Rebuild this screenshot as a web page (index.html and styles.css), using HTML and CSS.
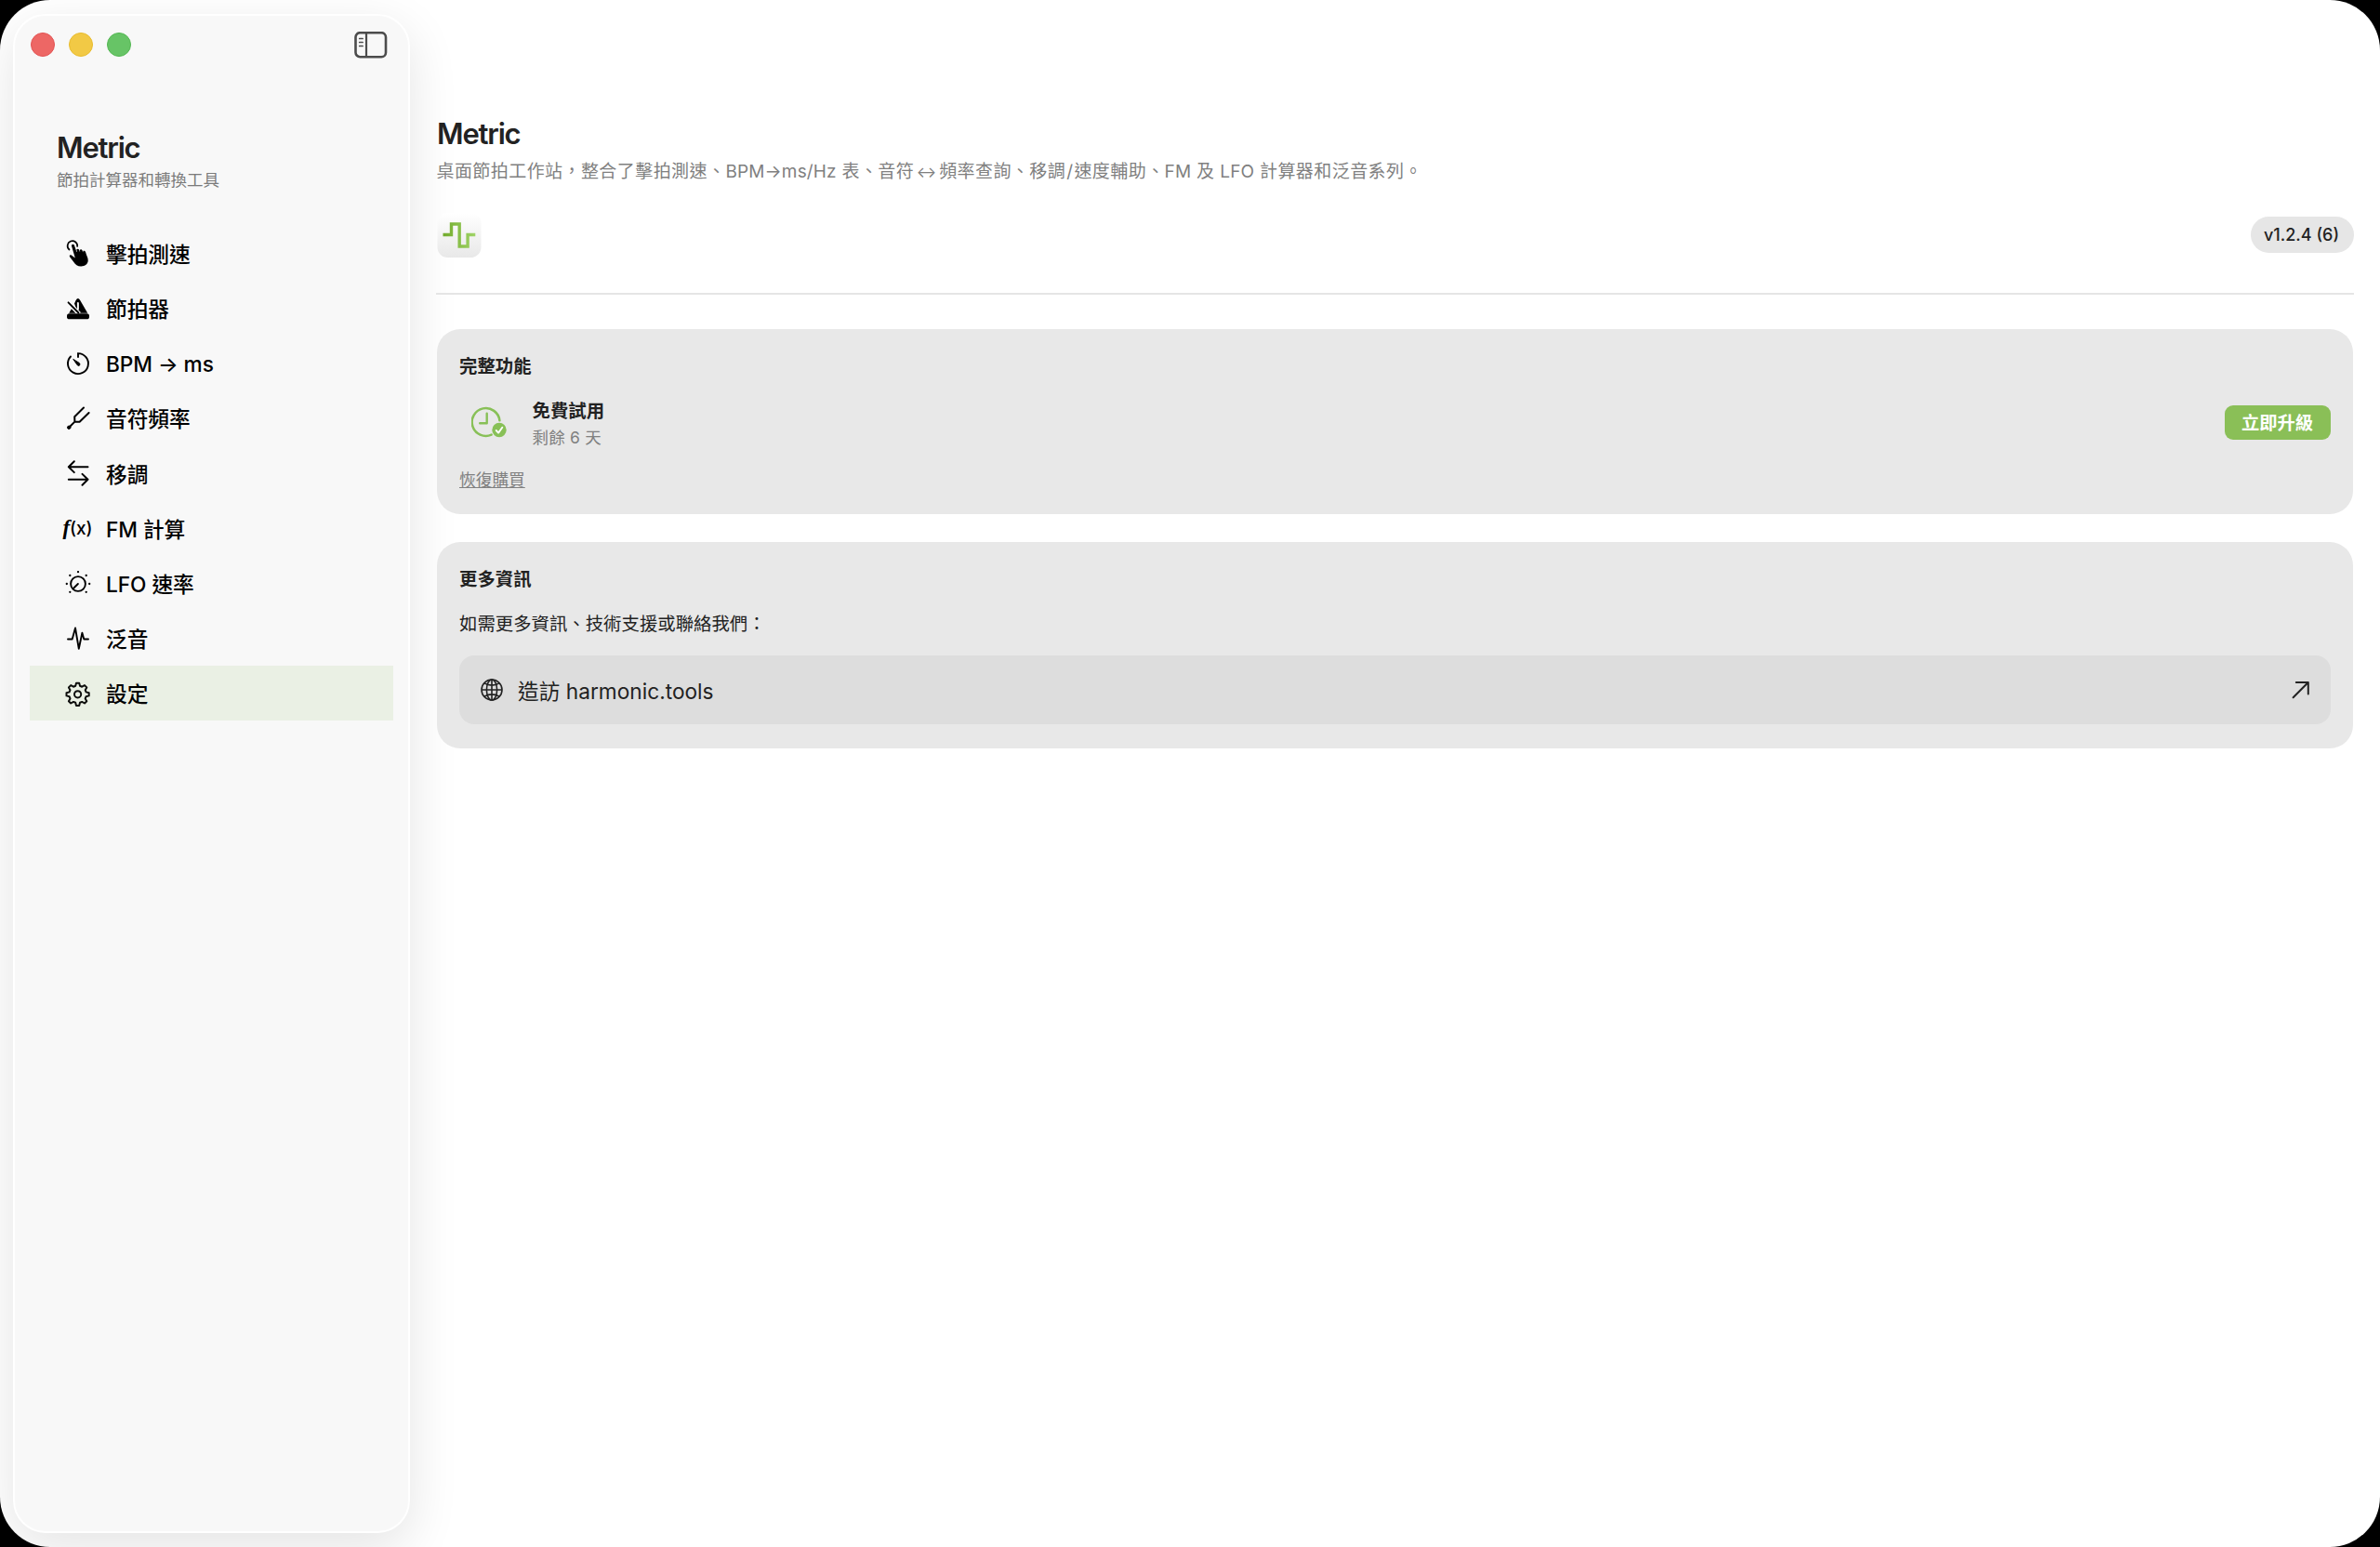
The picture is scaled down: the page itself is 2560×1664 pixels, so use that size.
FILE: index.html
```
<!DOCTYPE html>
<html lang="zh-Hant">
<head>
  <meta charset="UTF-8">
  <meta name="viewport" content="width=device-width, initial-scale=1.0">
  <title>Metric</title>
  <link rel="stylesheet" href="styles.css">
</head>
<body>

  <div class="window">
    <aside class="sidebar">
      <div class="titlebar">
        <div class="lights">
          <span class="light red"></span>
          <span class="light yellow"></span>
          <span class="light green"></span>
        </div>
        <svg class="toggle" viewBox="0 0 36 30" fill="none" stroke="#4c4c4c" stroke-linecap="round">
          <rect x="1.5" y="1.2" width="32.5" height="26" rx="4.8" stroke-width="2.6"/>
          <path d="M13 2v25" stroke-width="2.2"/>
          <path d="M5.7 7.500h3.4M5.7 11.500h3.4M5.7 15.500h3.4" stroke-width="1.7"/>
        </svg>
      </div>

      <div class="brand">
        <h2>Metric</h2>
        <p>節拍計算器和轉換工具</p>
      </div>

      <nav class="menu">
        <a class="item">
          <svg class="icon" viewBox="0 0 32 32">
            <path d="M6.500 11.500A5.300 5.300 0 1 1 15.200 8" fill="none" stroke="#000" stroke-width="1.700" stroke-linecap="round"/>
            <path d="M9 7.500c-.4-1.800 2.300-2.600 2.900-.8l2.500 7.200.5-.1-.6-2.200c.5-1.300 2.300-1.200 2.800.1l.7 2 .4-.1-.4-1.500c.6-1.200 2.200-1 2.700.2l.6 1.900.4-.1-.2-1c1.200-.9 2.500-.1 2.800 1.100.8 3.300 2.800 6.100 2.600 9.100-.2 3.900-3.400 6.200-7.500 6.200-4 0-6-2-8-4.800l-4-5.300c-1.200-1.700.3-2.800 1.900-1.700l3.700 2.900z" fill="#000"/>
          </svg>
          <span>擊拍測速</span>
        </a>
        <a class="item">
          <svg class="icon" viewBox="0 0 32 32">
            <path d="M12 10.500L13.600 7q2.200-4 4.600 0l8 13.700H6.200l2.700-4.500 4.500 4.500h2.500z" fill="#000"/>
            <path d="M15.900 16.500V10" stroke="#f8f8f8" stroke-width="2" stroke-linecap="round"/>
            <path d="M5.500 9.300l12 12" stroke="#f8f8f8" stroke-width="4"/>
            <path d="M5.500 9.300l11 11.200" stroke="#000" stroke-width="1.800" stroke-linecap="round"/>
            <rect x="4" y="21.300" width="24" height="6" rx="2.600" fill="#000"/>
          </svg>
          <span>節拍器</span>
        </a>
        <a class="item">
          <svg class="icon" viewBox="0 0 32 32" fill="none" stroke="#000" stroke-width="1.900" stroke-linecap="round">
            <path d="M16 9V5.100A11 11 0 1 1 8 8.500"/>
            <path d="M11 11.700l4.300 6.100q1.500 1.200 2.300.1t-.1-2.200z" fill="#000" stroke-width="1"/>
          </svg>
          <span>BPM → ms</span>
        </a>
        <a class="item">
          <svg class="icon" viewBox="0 0 32 32" fill="none" stroke="#000" stroke-width="2" stroke-linecap="round" stroke-linejoin="round">
            <path d="M22 4.500l-9.800 9.800.2 5.300 5.200.2L27.600 10M12.400 19.600L6.500 25.500"/>
            <circle cx="6.200" cy="25.800" r="1.700" fill="#000" stroke-width="1"/>
          </svg>
          <span>音符頻率</span>
        </a>
        <a class="item">
          <svg class="icon" viewBox="0 0 32 32" fill="none" stroke="#000" stroke-width="2" stroke-linecap="round" stroke-linejoin="round">
            <path d="M26.500 9.200H5.800M11.800 3.300L5.800 9.200l6 5.900M5.800 22.800h20.700M20.500 16.900l6 5.900-6 5.900"/>
          </svg>
          <span>移調</span>
        </a>
        <a class="item">
          <span class="icon fx"><i>f</i>(x)</span>
          <span>FM 計算</span>
        </a>
        <a class="item">
          <svg class="icon" viewBox="0 0 32 32">
            <circle cx="16" cy="17" r="7.900" fill="none" stroke="#000" stroke-width="1.900"/>
            <path d="M11.300 21.500l4.600-4.500" stroke="#000" stroke-width="1.900" stroke-linecap="round"/>
            <path d="M16 4.200h.01M7.300 8h.01M24.700 8h.01M3.800 17h.01M28.200 17h.01M7.300 25.800h.01M24.700 25.800h.01" stroke="#000" stroke-width="2.300" stroke-linecap="round"/>
          </svg>
          <span>LFO 速率</span>
        </a>
        <a class="item">
          <svg class="icon" viewBox="0 0 32 32" fill="none" stroke="#000" stroke-width="1.900" stroke-linecap="round" stroke-linejoin="round">
            <path d="M5 16.500h4.700L13 4.500l3.800 22.300 3.600-17 1.900 6.700h4.700"/>
          </svg>
          <span>泛音</span>
        </a>
        <a class="item active">
          <svg class="icon" viewBox="0 0 32 32" fill="none" stroke="#0d0e0c" stroke-width="2" stroke-linejoin="round">
            <path d="M14 4.700h3.200l.8 3.100 2.200.9 2.800-1.600 2.300 2.300-1.600 2.800.9 2.200 3.100.8v3.200l-3.100.8-.9 2.200 1.600 2.800-2.300 2.300-2.800-1.600-2.200.9-.8 3.100H14l-.8-3.100-2.200-.9-2.800 1.600-2.300-2.300 1.600-2.800-.9-2.200-3.100-.8v-3.200l3.100-.8.9-2.200-1.600-2.800 2.300-2.300 2.800 1.600 2.200-.9z"/>
            <circle cx="15.600" cy="16.800" r="3.600"/>
          </svg>
          <span>設定</span>
        </a>
      </nav>
    </aside>

    <main class="content">
      <header>
        <h1>Metric</h1>
        <p class="description">桌面節拍工作站，整合了擊拍測速、<span class="latin">BPM→ms/Hz</span> 表、音符<span class="arrow">↔</span>頻率查詢、移調<span class="slash">/</span>速度輔助、<span class="latin">FM</span> 及 <span class="latin">LFO</span> 計算器和泛音系列。</p>
        <div class="app-row">
          <svg class="logo" viewBox="0 0 48 50">
            <defs>
              <linearGradient id="tile" x1="0" y1="0" x2="0" y2="1">
                <stop offset="0" stop-color="#ffffff"/>
                <stop offset="1" stop-color="#e8e8e8"/>
              </linearGradient>
              <linearGradient id="wave" x1="0" y1="0" x2="1" y2="0">
                <stop offset="0" stop-color="#72ab2c"/>
                <stop offset="1" stop-color="#a0d468"/>
              </linearGradient>
            </defs>
            <rect x="0.500" y="1" width="47" height="48" rx="11" fill="url(#tile)"/>
            <path d="M6.500 24.500h9v-11.500h8.700v24h8.900v-12.500h8.200" fill="none" stroke="url(#wave)" stroke-width="3.400"/>
          </svg>
          <span class="version">v1.2.4 (6)</span>
        </div>
      </header>

      <section class="card purchase">
        <h3>完整功能</h3>
        <div class="trial">
          <svg class="clock" viewBox="0 0 40 36">
            <path d="M30.400 15.300A14.900 14.900 0 1 0 21.600 30.600" fill="none" stroke="#88c057" stroke-width="2.500" stroke-linecap="round"/>
            <path d="M16.700 7.700v10.500H9.200" fill="none" stroke="#88c057" stroke-width="2.400" stroke-linecap="round" stroke-linejoin="round"/>
            <circle cx="30" cy="25.500" r="7.700" fill="#88c057"/>
            <path d="M26.700 26l2.400 2.600 4.200-5.900" fill="none" stroke="#fff" stroke-width="1.900" stroke-linecap="round" stroke-linejoin="round"/>
          </svg>
          <div class="trial-text">
            <strong>免費試用</strong>
            <span>剩餘 6 天</span>
          </div>
          <button class="upgrade">立即升級</button>
        </div>
        <a class="restore">恢復購買</a>
      </section>

      <section class="card more">
        <h3>更多資訊</h3>
        <p>如需更多資訊、技術支援或聯絡我們：</p>
        <a class="visit">
          <svg class="globe" viewBox="0 0 26 26" fill="none" stroke="#222" stroke-width="1.600">
            <circle cx="13" cy="13" r="11"/>
            <ellipse cx="13" cy="13" rx="5.600" ry="11"/>
            <path d="M13 2v22M2 13h22M4.800 5.800q8.200 4.600 16.400 0M4.800 20.200q8.200-4.600 16.400 0"/>
          </svg>
          <span>造訪 harmonic.tools</span>
          <svg class="open" viewBox="0 0 20 20" fill="none" stroke="#222" stroke-width="2" stroke-linecap="round" stroke-linejoin="round">
            <path d="M1.600 18.200L17.500 2.300M4.800 2h13v12.500"/>
          </svg>
        </a>
      </section>
    </main>
  </div>

</body>
</html>
```
FILE: styles.css
```
* {
  box-sizing: border-box;
}
body {
  margin: 0;
  background-color: #000;
  font-family: Inter, "Noto Sans CJK TC", sans-serif;
  color: #222;
}
h1, h2, h3, p {
  margin: 0;
}
.window {
  display: flex;
  width: 2560px;
  height: 1664px;
  padding: 15px 28px 15px 14px;
  border-radius: 54px;
  background-color: #fff;
  overflow: hidden;
}

/* sidebar */
.sidebar {
  width: 427px;
  flex-shrink: 0;
  border: 2px solid #fff;
  border-radius: 35px;
  background-color: #f8f8f8;
  box-shadow: 0 16px 54px rgba(0, 0, 0, 0.11);
}
.titlebar {
  display: flex;
  justify-content: space-between;
  padding: 17px 22px 0 17px;
  height: 48px;
}
.lights {
  display: flex;
  gap: 15px;
  padding-top: 1px;
}
.light {
  width: 26px;
  height: 26px;
  border-radius: 50%;
}
.red {
  background-color: #ed6765;
  border: 1px solid #e25252;
}
.yellow {
  background-color: #f2c945;
  border: 1px solid #e8bb2c;
}
.green {
  background-color: #67c466;
  border: 1px solid #52b751;
}
.toggle {
  width: 36px;
  height: 30px;
}
.brand {
  padding: 75px 0 0 45px;
}
.brand h2, h1 {
  height: 38px;
  line-height: 38px;
  font-size: 31px;
  font-weight: 600;
  letter-spacing: -1.2px;
}
.brand p {
  height: 32px;
  line-height: 32px;
  font-size: 17.5px;
  color: #7b7b7b;
}
.menu {
  padding: 33px 16px 0;
}
.item {
  display: flex;
  align-items: center;
  height: 59.15px;
  padding-left: 35.5px;
  gap: 14.5px;
  font-size: 22.7px;
  font-weight: 450;
  line-height: 32px;
  letter-spacing: -0.05px;
  color: #000;
  white-space: nowrap;
}
.item > span:last-child {
  padding-top: 3px;
}
.icon {
  width: 32px;
  height: 32px;
  flex-shrink: 0;
}
.fx {
  display: flex;
  align-items: baseline;
  justify-content: center;
  line-height: 32px;
  font-size: 19px;
}
.fx i {
  font-family: "Liberation Serif", serif;
  font-size: 23px;
  font-weight: 700;
}
.active {
  background-color: #eaf0e4;
}

/* main area */
.content {
  flex: 1;
  padding: 110px 0 0 28px;
}
header {
  height: 192px;
  border-bottom: 2px solid #e5e5e5;
}
h1 {
  padding-left: 1px;
}
.description {
  height: 40px;
  padding: 2px 0 0 0.5px;
  line-height: 40px;
  font-size: 19px;
  letter-spacing: 0.43px;
  color: #808080;
  white-space: nowrap;
}
.latin {
  letter-spacing: 0.15px;
}
.arrow {
  font-size: 16px;
  padding: 0 2.5px;
}
.slash {
  padding: 0 1px;
}
.app-row {
  display: flex;
  align-items: flex-start;
  justify-content: space-between;
  padding-top: 25px;
}
.logo {
  width: 48px;
  height: 50px;
  margin-left: 1px;
}
.version {
  width: 111px;
  height: 39px;
  margin-top: 5px;
  padding-right: 2px;
  border-radius: 20px;
  background-color: #e6e6e6;
  line-height: 39px;
  text-align: center;
  font-size: 18px;
  font-weight: 450;
}
.card {
  margin: 0 1px;
  border-radius: 25px;
  background-color: #e8e8e8;
  padding: 0 24px;
}
.purchase {
  margin-top: 37px;
  height: 199px;
  padding-top: 25px;
}
.card h3 {
  height: 30px;
  line-height: 30px;
  font-size: 19.4px;
  font-weight: 600;
}
.trial {
  display: flex;
  align-items: center;
  height: 60px;
  margin-top: 15px;
}
.clock {
  width: 40px;
  height: 36px;
  margin: 2px 0 0 13px;
}
.trial-text {
  display: flex;
  flex-direction: column;
  flex: 1;
  margin-left: 25.5px;
  padding-top: 2px;
}
.trial-text strong {
  line-height: 30px;
  font-size: 19.4px;
  font-weight: 600;
}
.trial-text span {
  line-height: 27px;
  font-size: 17.5px;
  letter-spacing: 0.2px;
  color: #808080;
}
.upgrade {
  width: 114px;
  height: 37px;
  padding: 0 1px 0 0;
  border: none;
  border-radius: 9px;
  background-color: #8abf57;
  color: #fff;
  font-family: inherit;
  font-size: 19.3px;
  font-weight: 600;
}
.restore {
  display: inline-block;
  margin-top: 17px;
  line-height: 32px;
  font-size: 17.7px;
  color: #808080;
  text-decoration: underline;
}
.more {
  margin-top: 30px;
  height: 222px;
  padding-top: 25px;
}
.more p {
  height: 30px;
  line-height: 30px;
  margin-top: 18px;
  font-size: 19.4px;
}
.visit {
  display: flex;
  align-items: center;
  height: 74px;
  margin-top: 19px;
  padding: 0 22.5px 0 22px;
  border-radius: 16px;
  background-color: #dddddd;
  font-size: 22.7px;
}
.globe {
  width: 26px;
  height: 26px;
  margin-right: 15px;
}
.visit span {
  flex: 1;
}
.open {
  width: 20px;
  height: 20px;
}
```
